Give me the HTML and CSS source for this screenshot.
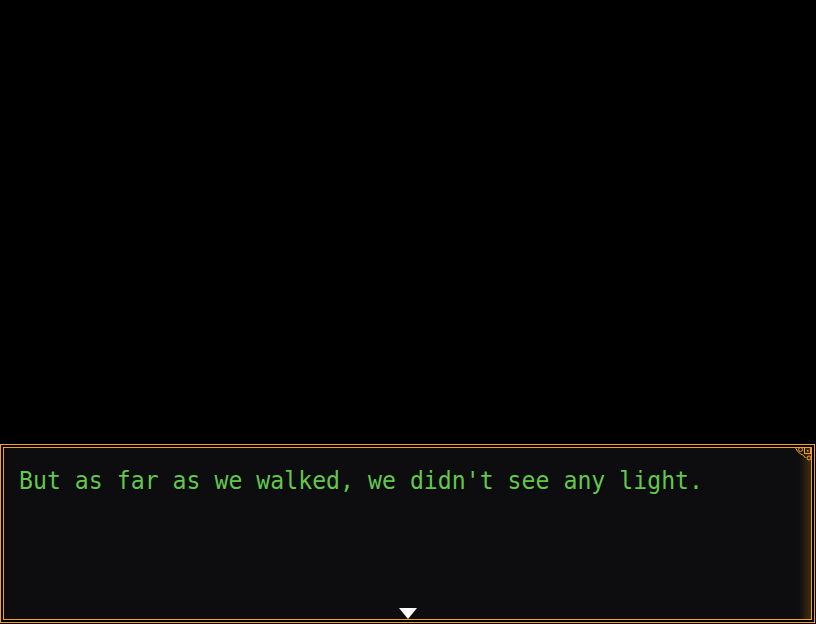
FILE: index.html
```html
<!DOCTYPE html>
<html>
<head>
<meta charset="utf-8">
<link rel="stylesheet" href="styles.css">
</head>
<body>
<div class="stage">
  <div class="scene"></div>
  <div class="msgbox">
    <div class="inner">
      <p class="text">But as far as we walked, we didn't see any light.</p>
      <div class="fade"></div>
      <svg class="ornament" width="18" height="16" viewBox="0 0 18 16">
        <path d="M0.5 0.5 Q2 5 5 6.5 Q9 8 10.5 11" fill="none" stroke="#f7a21b" stroke-width="1"/>
        <circle cx="5.5" cy="2.5" r="2" fill="none" stroke="#f7a21b" stroke-width="1"/>
        <rect x="9.5" y="0.5" width="6" height="6" fill="none" stroke="#f7a21b" stroke-width="1"/>
        <rect x="12" y="3" width="1.5" height="1.5" fill="#f7a21b"/>
        <circle cx="14" cy="11" r="2" fill="none" stroke="#f7a21b" stroke-width="1"/>
      </svg>
      <div class="pause"></div>
    </div>
  </div>
</div>
</body>
</html>
```
FILE: styles.css
```css
html, body {
  margin: 0;
  padding: 0;
  background: #000;
}
.stage {
  width: 816px;
  height: 624px;
  display: flex;
  flex-direction: column;
  background: #000;
}
.scene {
  height: 444px;
  flex: none;
}
.msgbox {
  width: 815px;
  height: 179px;
  box-sizing: border-box;
  border: 1px solid #f7a21b;
  padding: 2px;
  background: #000;
}
.inner {
  position: relative;
  height: 100%;
  box-sizing: border-box;
  border: 1px solid #f7a21b;
  background: #0d0d0f;
  padding: 19px 15px 0 15px;
  overflow: hidden;
}
.text {
  margin: 0;
  font-family: "DejaVu Sans Mono", monospace;
  font-size: 23.2px;
  line-height: 28px;
  color: #62c84c;
  text-shadow: 1px 1px 1px rgba(0,0,0,0.6);
  position: relative;
  transform: scaleY(1.08);
  transform-origin: left bottom;
}
.fade {
  position: absolute;
  top: 0;
  right: 0;
  width: 12px;
  height: 100%;
  background: linear-gradient(to right, rgba(247,162,27,0), rgba(247,162,27,0.22));
}
.ornament {
  position: absolute;
  top: -1px;
  right: -2px;
}
.pause {
  position: absolute;
  left: 395px;
  bottom: 0;
  width: 0;
  height: 0;
  border-left: 9px solid transparent;
  border-right: 9px solid transparent;
  border-top: 11px solid #fff;
}
```
